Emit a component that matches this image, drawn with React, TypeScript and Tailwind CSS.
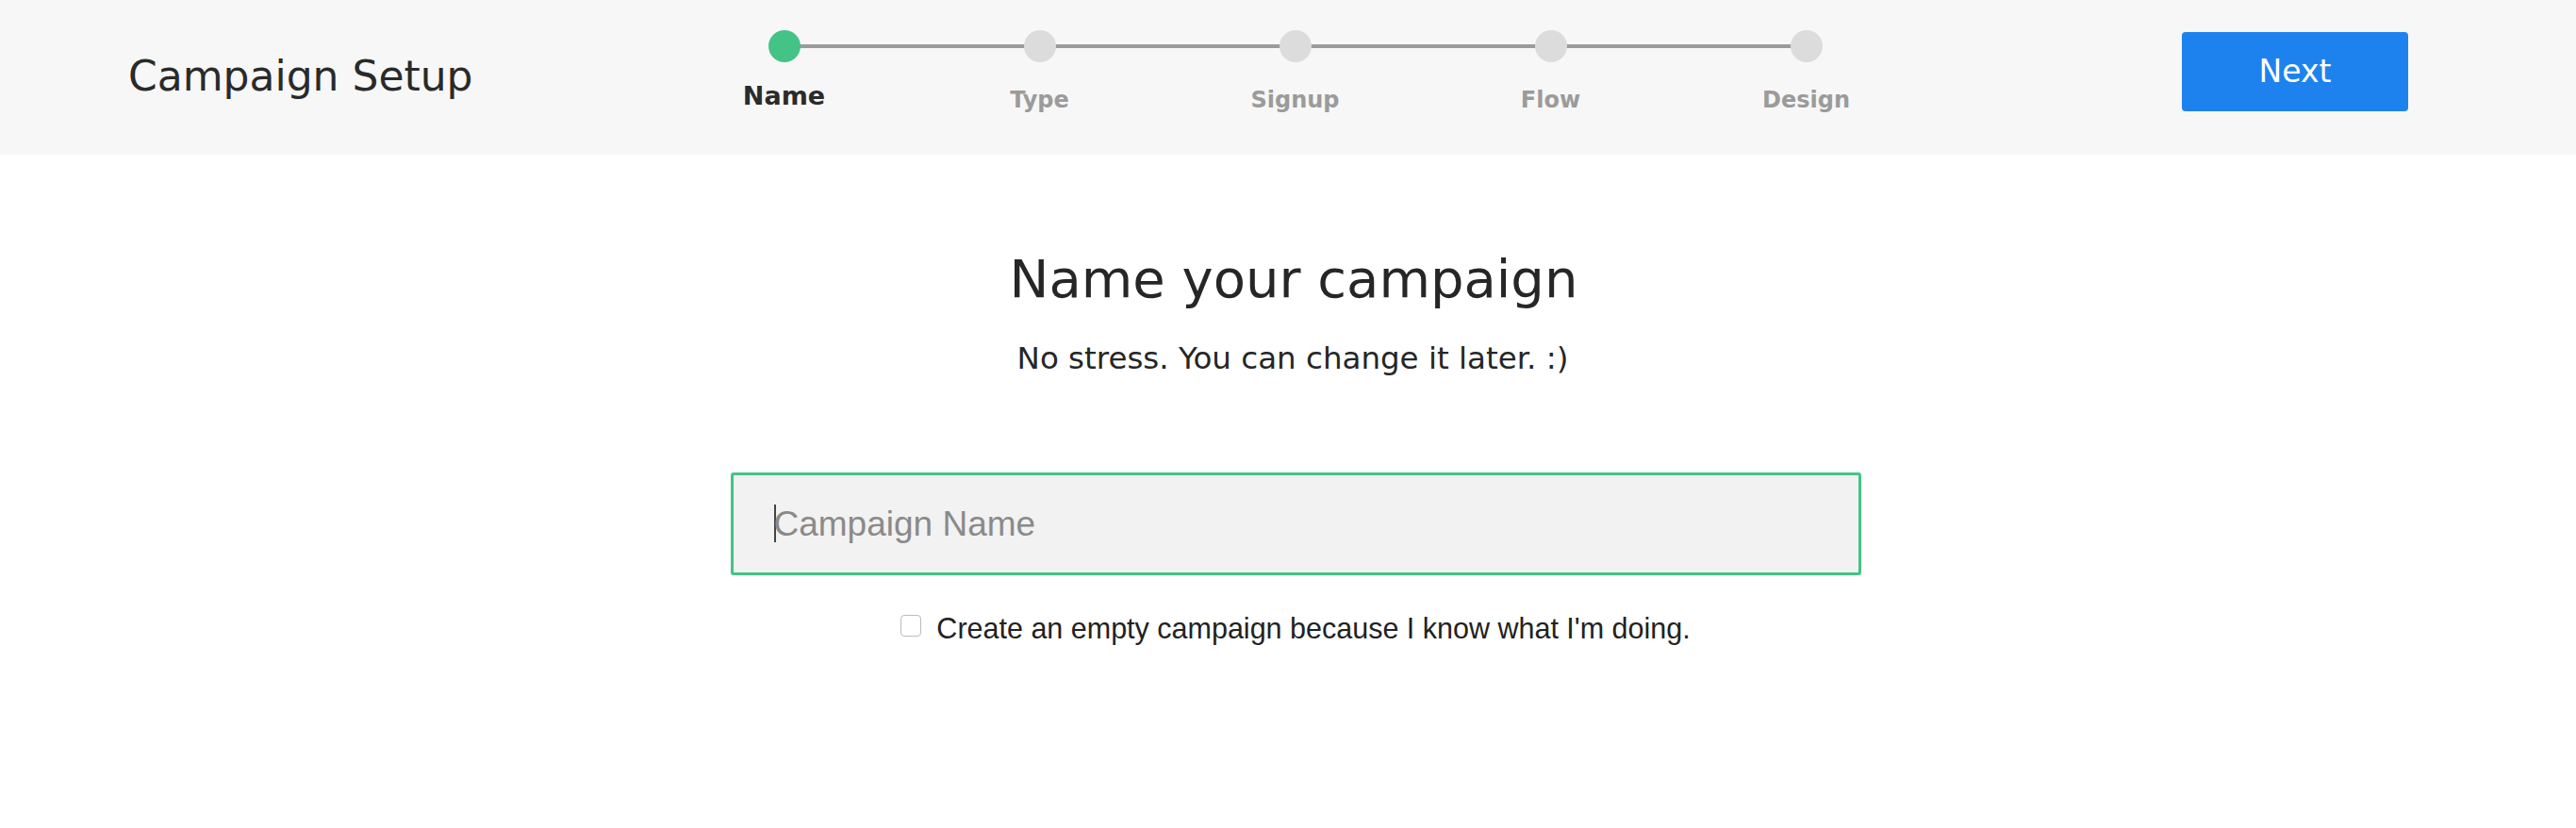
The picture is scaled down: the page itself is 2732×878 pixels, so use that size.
import React from "react";

const steps = ["Name", "Type", "Signup", "Flow", "Design"];

export default function App() {
  return (
    <div className="min-h-[878px] bg-white" style={{ fontFamily: '"DejaVu Sans", sans-serif' }}>
      <header className="h-[164px] bg-[#f7f7f7] flex items-center pl-[136px]">
        <div className="text-[44px] text-[#2a2a2a] w-[560px] leading-none -mt-[2px]">Campaign Setup</div>
        <div className="relative flex w-[1355px] -mt-[8px]">
          <div className="absolute left-[135px] right-[135px] top-[15px] h-[4px] bg-[#9b9b9b]" />
          {steps.map((s, i) => (
            <div key={s} className="relative w-[271px] flex flex-col items-center">
              <div className={`w-[34px] h-[34px] rounded-full ${i === 0 ? "bg-[#44c386]" : "bg-[#dcdcdc]"}`} />
              <div className={`font-bold ${i === 0 ? "text-[27px] text-[#2b2b2b] mt-[16px]" : "text-[24px] text-[#9b9b9b] mt-[22px]"}`}>{s}</div>
            </div>
          ))}
        </div>
        <button className="w-[240px] h-[84px] bg-[#1e82ee] rounded-[4px] text-white text-[33px] -mt-[12px] ml-[263px]">Next</button>
      </header>
      <main className="flex flex-col items-center">
        <h1 className="mt-[104px] text-[56px] leading-none text-[#262626] ml-[12px]">Name your campaign</h1>
        <p className="mt-[32px] text-[32.5px] text-[#262626] ml-[10px]">No stress. You can change it later. :)</p>
        <div className="mt-[96px] ml-[16px] w-[1199px] h-[109px] border-[3px] border-[#44c386] rounded-[3px] bg-[#f2f2f2] flex items-center pl-[43px]">
          <span className="w-[2px] h-[40px] bg-[#444] -mr-[2px]" />
          <input
            placeholder="Campaign Name"
            className="bg-transparent outline-none text-[37px] text-[#333] placeholder:text-[#8a8a8a] w-full"
            style={{ fontFamily: '"Liberation Sans", Arial, sans-serif' }}
          />
        </div>
        <label className="mt-[34px] ml-[16px] flex items-center gap-[16px] text-[30.5px] text-[#222]" style={{ fontFamily: '"Liberation Sans", Arial, sans-serif' }}>
          <span className="w-[22px] h-[23px] border border-[#bbb] rounded-[4px] bg-white -mt-[6px]" />
          Create an empty campaign because I know what I'm doing.
        </label>
      </main>
    </div>
  );
}
